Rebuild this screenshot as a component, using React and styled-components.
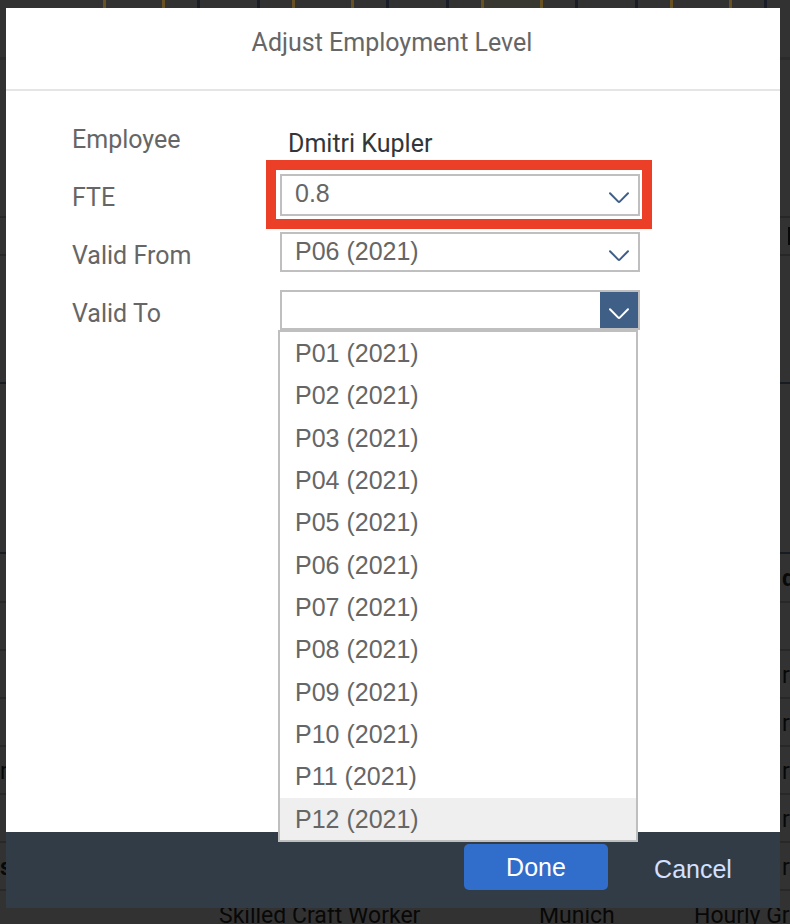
import React from "react";
import styled, { createGlobalStyle } from "styled-components";

const GlobalStyle = createGlobalStyle`
  * { box-sizing: border-box; }
  body { margin: 0; background: #323232; }
  button, input, select { font: inherit; }
`;

const labelFont = `"Roboto", "Liberation Sans", sans-serif`;
const controlFont = `"Liberation Sans", Arial, sans-serif`;

const Page = styled.div`
  position: relative;
  height: 100vh;
  overflow: hidden;
  font-family: ${labelFont};
`;

const Backdrop = styled.div`
  color: #080808;
  font-size: 23px;
`;

const ChartStrip = styled.div`
  display: flex;
  gap: 32px;
  height: 60px;
  padding-left: 103px;
  border-bottom: 3px solid #2b2b2b;
  overflow: hidden;
`;

const ChartBar = styled.div`
  flex: 0 0 auto;
  width: ${(p) => (p.$forecast ? "62px" : "63px")};
  border: solid ${(p) => (p.$forecast ? "#685223" : "#181d28")};
  border-width: 0 3px;
  background: ${(p) => (p.$filled ? "#383730" : "transparent")};
`;

const Band = styled.div`
  display: flex;
  align-items: center;
  justify-content: flex-end;
  height: ${(p) => p.$height}px;
  border-bottom: 2px solid ${(p) => (p.$strong ? "#171c23" : "#272727")};
`;

const PanelEdge = styled.span`
  width: 2px;
  height: 18px;
  background: #080808;
`;

const StaffTable = styled.table`
  width: 100%;
  table-layout: fixed;
  border-collapse: collapse;
`;

const StaffCell = styled.td`
  height: 48px;
  padding: 3px 0 0;
  border-bottom: 2px solid #282828;
  font-weight: ${(p) => (p.$bold ? 700 : 400)};
  text-indent: ${(p) => (p.$end ? "88px" : "0")};
  line-height: 28px;
  white-space: nowrap;
  overflow: hidden;
`;

const Overlay = styled.div`
  position: absolute;
  inset: 0;
  display: flex;
  padding: 8px 10px 16px 6px;
`;

const Dialog = styled.form`
  flex: 1;
  display: flex;
  flex-direction: column;
  background: #fff;
  color: #666;
  font-size: 25px;
  line-height: 30px;
`;

const Header = styled.header`
  padding: 20px 20px 31px 18px;
  border-bottom: 2px solid #e5e5e5;
  text-align: center;
`;

const Title = styled.h1`
  margin: 0;
  font-size: 25px;
  font-weight: 400;
  line-height: 30px;
`;

const Body = styled.div`
  flex: 1;
  padding: 25px 66px 0;
`;

const Row = styled.div`
  display: grid;
  grid-template-columns: 208px minmax(0, 360px);
  align-items: start;
  height: 58px;
`;

const Label = styled.label`
  padding-top: 9px;
`;

const Value = styled.output`
  padding: 13px 8px 0;
  color: #32363a;
`;

const Field = styled.div`
  position: relative;
  display: grid;
  grid-template-columns: minmax(0, 1fr) 38px;
  height: ${(p) => (p.$highlighted ? 42 : 40)}px;
  border: 2px solid #bfbfbf;
  background: #fff;
  font-family: ${controlFont};

  &::after {
    content: ${(p) => (p.$highlighted ? '""' : "none")};
    position: absolute;
    inset: -16px -14px -15px -16px;
    border: 10px solid #eb4027;
    pointer-events: none;
  }
`;

const Select = styled.select`
  grid-area: 1 / 1 / 2 / 3;
  appearance: none;
  width: 100%;
  height: 36px;
  min-width: 0;
  padding: 0 40px 2px 13px;
  border: 0;
  background: transparent;
  color: #666;
  outline: 0;
`;

const ArrowSlot = styled.span`
  grid-area: 1 / 2;
  display: flex;
  justify-content: center;
  padding-top: 16px;
  color: #3f5f86;
  pointer-events: none;
`;

const Combo = styled.input`
  min-width: 0;
  padding: 0 13px;
  border: 0;
  background: transparent;
  color: #666;
  outline: 0;
`;

const ArrowButton = styled.button`
  display: flex;
  justify-content: center;
  padding: 16px 0 0;
  border: 0;
  background: #3f5f86;
  color: #fff;
`;

const Options = styled.ul`
  position: absolute;
  z-index: 1;
  top: calc(100% + 2px);
  left: -4px;
  display: flex;
  flex-direction: column;
  width: calc(100% + 4px);
  height: 512px;
  margin: 0;
  padding: 0;
  border: 2px solid #bfbfbf;
  background: #fff;
  list-style: none;
`;

const Option = styled.li`
  flex: 1;
  display: flex;
  align-items: center;
  padding-left: 15px;
  background: ${(p) => (p.$active ? "#efefef" : "transparent")};
`;

const Footer = styled.footer`
  display: flex;
  justify-content: flex-end;
  gap: 26px;
  padding: 12px 28px 18px;
  background: #323c46;
  font-family: ${controlFont};
`;

const FooterButton = styled.button`
  height: 46px;
  padding: 0;
  border: 0;
  border-radius: 5px;
  width: ${(p) => (p.$primary ? "144px" : "118px")};
  background: ${(p) => (p.$primary ? "#316dca" : "transparent")};
  color: ${(p) => (p.$primary ? "#fff" : "#d3e0ff")};
  padding-top: ${(p) => (p.$primary ? "0" : "4px")};
`;

const Chevron = () => (
  <svg width="20" height="12" viewBox="0 0 20 12" fill="none" aria-hidden="true">
    <path d="M1 1.2 L9 9.4 Q10 10.4 11 9.4 L19 1.2" stroke="currentColor" strokeWidth="2" strokeLinecap="round" />
  </svg>
);

const periods = Array.from({ length: 12 }, (_, i) => `P${String(i + 1).padStart(2, "0")} (2021)`);

const staff = [
  ["", "", "", ""],
  ["", "", "", "r"],
  ["", "", "", "r"],
  ["r", "", "", "r"],
  ["", "", "", "r"],
  ["s", "", "", "r"],
  ["", "Skilled Craft Worker", "Munich", "Hourly Gr"],
];

function SelectRow({ id, label, value, options, highlighted }) {
  return (
    <Row>
      <Label htmlFor={id}>{label}</Label>
      <Field $highlighted={highlighted}>
        <Select id={id} defaultValue={value}>
          {options.map((o) => <option key={o}>{o}</option>)}
        </Select>
        <ArrowSlot><Chevron /></ArrowSlot>
      </Field>
    </Row>
  );
}

export default function App() {
  return (
    <>
      <GlobalStyle />
      <Page>
        <Backdrop aria-hidden="true">
          <ChartStrip>
            {Array.from({ length: 8 }, (_, i) => (
              <ChartBar key={i} $forecast={i % 2 === 0} $filled={i === 4} />
            ))}
          </ChartStrip>
          <Band $height={158} />
          <Band $height={38}><PanelEdge /></Band>
          <Band $height={128} $strong />
          <Band $height={170} $strong />
          <StaffTable>
            <colgroup>
              <col style={{ width: 219 }} />
              <col style={{ width: 320 }} />
              <col style={{ width: 155 }} />
              <col />
            </colgroup>
            <tbody>
              <tr>
                <StaffCell colSpan={3} />
                <StaffCell $bold $end>d</StaffCell>
              </tr>
              {staff.map((cells, r) => (
                <tr key={r}>
                  {cells.map((c, i) => (
                    <StaffCell key={i} $bold={c === "s"} $end={i === 3 && c === "r"}>{c}</StaffCell>
                  ))}
                </tr>
              ))}
            </tbody>
          </StaffTable>
        </Backdrop>
        <Overlay>
          <Dialog role="dialog" aria-labelledby="title" onSubmit={(e) => e.preventDefault()}>
            <Header><Title id="title">Adjust Employment Level</Title></Header>
            <Body>
              <Row>
                <Label htmlFor="employee">Employee</Label>
                <Value id="employee">Dmitri Kupler</Value>
              </Row>
              <SelectRow id="fte" label="FTE" value="0.8" options={["0.8"]} highlighted />
              <SelectRow id="from" label="Valid From" value="P06 (2021)" options={periods} />
              <Row>
                <Label htmlFor="to">Valid To</Label>
                <Field>
                  <Combo id="to" type="text" role="combobox" aria-expanded="true" aria-controls="to-options" />
                  <ArrowButton type="button" aria-label="Show periods"><Chevron /></ArrowButton>
                  <Options id="to-options" role="listbox" aria-label="Valid To">
                    {periods.map((p, i) => (
                      <Option key={p} role="option" aria-selected={i === 11} $active={i === 11}>{p}</Option>
                    ))}
                  </Options>
                </Field>
              </Row>
            </Body>
            <Footer>
              <FooterButton $primary type="submit">Done</FooterButton>
              <FooterButton type="button">Cancel</FooterButton>
            </Footer>
          </Dialog>
        </Overlay>
      </Page>
    </>
  );
}
